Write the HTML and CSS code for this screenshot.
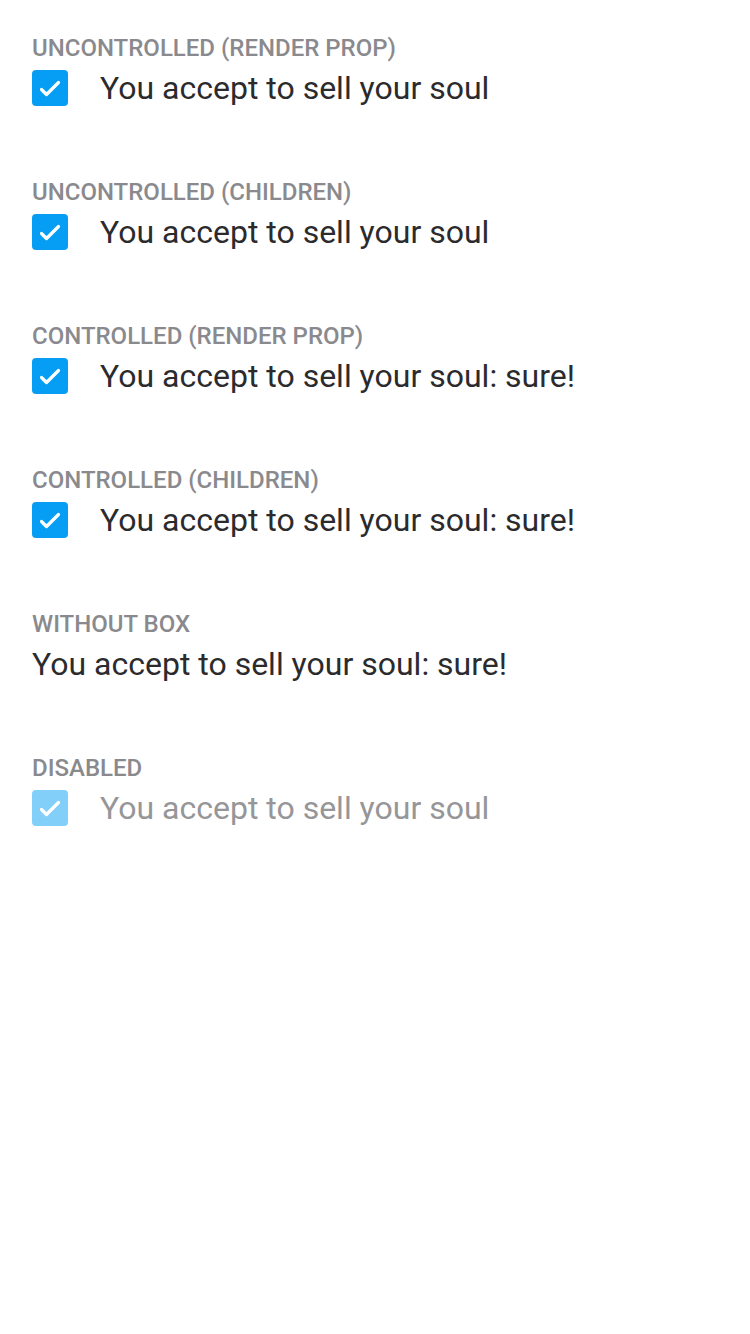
FILE: index.html
```html
<!DOCTYPE html>
<html>
<head>
<meta charset="utf-8">
<link rel="stylesheet" href="styles.css">
</head>
<body>
<main class="page">
  <section class="demo">
    <h2 class="title">Uncontrolled (render prop)</h2>
    <label class="row">
      <span class="box"><svg viewBox="0 0 36 36" width="36" height="36"><path d="M9.5 19.5 L14.5 24.5 L26.5 12.5" fill="none" stroke="#fff" stroke-width="3.2" stroke-linecap="round" stroke-linejoin="round"/></svg></span>
      <span class="label">You accept to sell your soul</span>
    </label>
  </section>
  <section class="demo">
    <h2 class="title">Uncontrolled (children)</h2>
    <label class="row">
      <span class="box"><svg viewBox="0 0 36 36" width="36" height="36"><path d="M9.5 19.5 L14.5 24.5 L26.5 12.5" fill="none" stroke="#fff" stroke-width="3.2" stroke-linecap="round" stroke-linejoin="round"/></svg></span>
      <span class="label">You accept to sell your soul</span>
    </label>
  </section>
  <section class="demo">
    <h2 class="title">Controlled (render prop)</h2>
    <label class="row">
      <span class="box"><svg viewBox="0 0 36 36" width="36" height="36"><path d="M9.5 19.5 L14.5 24.5 L26.5 12.5" fill="none" stroke="#fff" stroke-width="3.2" stroke-linecap="round" stroke-linejoin="round"/></svg></span>
      <span class="label">You accept to sell your soul: sure!</span>
    </label>
  </section>
  <section class="demo">
    <h2 class="title">Controlled (children)</h2>
    <label class="row">
      <span class="box"><svg viewBox="0 0 36 36" width="36" height="36"><path d="M9.5 19.5 L14.5 24.5 L26.5 12.5" fill="none" stroke="#fff" stroke-width="3.2" stroke-linecap="round" stroke-linejoin="round"/></svg></span>
      <span class="label">You accept to sell your soul: sure!</span>
    </label>
  </section>
  <section class="demo">
    <h2 class="title">Without box</h2>
    <label class="row">
      <span class="label plain">You accept to sell your soul: sure!</span>
    </label>
  </section>
  <section class="demo">
    <h2 class="title">Disabled</h2>
    <label class="row disabled">
      <span class="box"><svg viewBox="0 0 36 36" width="36" height="36"><path d="M9.5 19.5 L14.5 24.5 L26.5 12.5" fill="none" stroke="#fff" stroke-width="3.2" stroke-linecap="round" stroke-linejoin="round"/></svg></span>
      <span class="label">You accept to sell your soul</span>
    </label>
  </section>
</main>
</body>
</html>
```

FILE: styles.css
```css
html, body {
  margin: 0;
  padding: 0;
  background: #fff;
}
body {
  font-family: Roboto, "Liberation Sans", sans-serif;
  width: 750px;
  height: 1334px;
}
.page {
  display: flex;
  flex-direction: column;
  gap: 73px;
  padding: 35px 32px 0;
}
.demo {
  display: flex;
  flex-direction: column;
}
.title {
  margin: 0 0 9px;
  font-size: 24px;
  line-height: 26px;
  font-weight: 500;
  text-transform: uppercase;
  color: #8a8a8e;
}
.row {
  display: flex;
  align-items: center;
  gap: 32px;
  height: 36px;
}
.box {
  width: 36px;
  height: 36px;
  border-radius: 4px;
  background: #069df4;
  display: block;
  flex: none;
}
.box svg {
  display: block;
}
.label {
  font-size: 32px;
  line-height: 36px;
  color: #2b2b2e;
}
.disabled .box {
  background: #82cffa;
}
.disabled .label {
  color: #969699;
}
```
